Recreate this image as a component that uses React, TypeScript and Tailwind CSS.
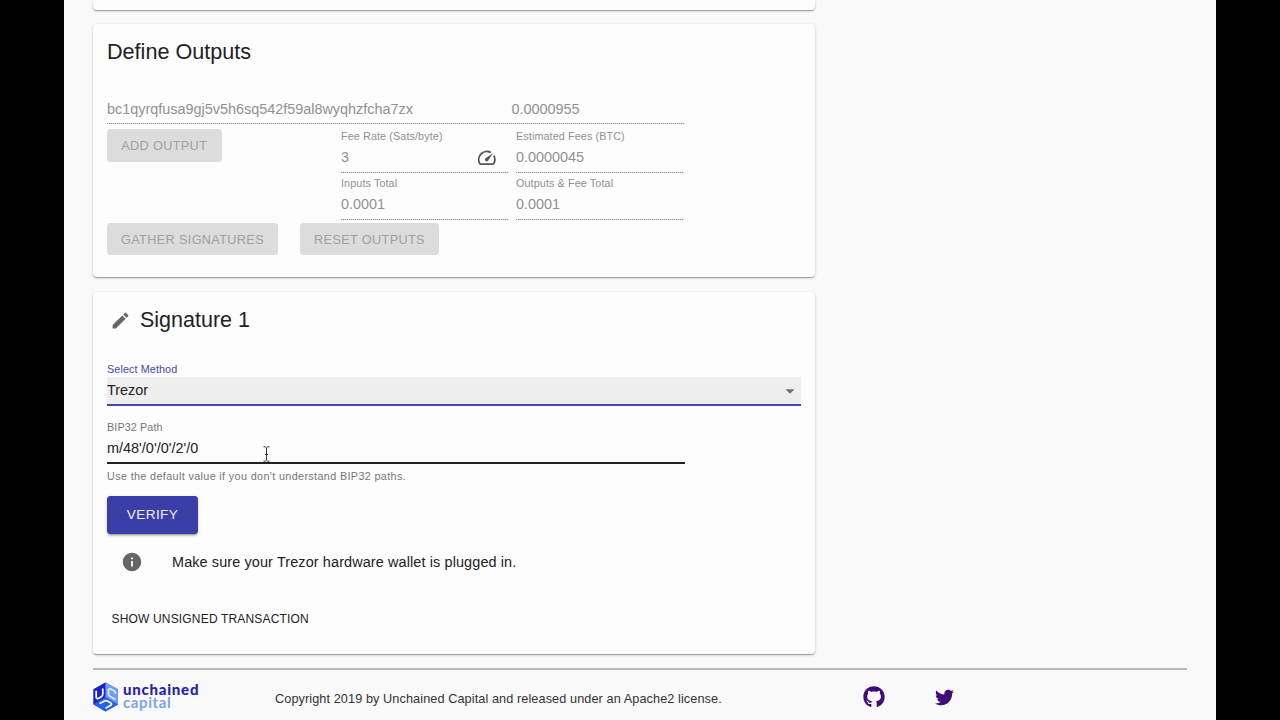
import type { ReactNode } from "react";
import { MdArrowDropDown, MdEdit, MdInfo, MdSpeed } from "react-icons/md";
import { FaGithub, FaTwitter } from "react-icons/fa";

const cardShadow =
  "shadow-[0px_1px_3px_0px_rgba(0,0,0,0.2),0px_1px_1px_0px_rgba(0,0,0,0.14),0px_2px_1px_-1px_rgba(0,0,0,0.15)]";

function DisabledButton({ children, className }: { children: ReactNode; className: string }) {
  return (
    <button
      className={`flex items-center justify-center rounded-[3.5px] bg-[#dcdcdc] text-[12.65px] tracking-[0.38px] whitespace-nowrap text-[#a0a0a0] ${className}`}
    >
      {children}
    </button>
  );
}

function DottedLine() {
  return (
    <div className="h-px w-full bg-[repeating-linear-gradient(90deg,#8c8c8c_0_1px,#dadada_1px_2px)]" />
  );
}

function ReadOnlyField({ label, value, icon }: { label: string; value: string; icon?: ReactNode }) {
  return (
    <div className="flex h-[47px] w-[168px] flex-col text-[#919191]">
      <div className="h-[15px] text-[10.8px] leading-[15px] tracking-[0.1px]">{label}</div>
      <div className="flex h-[28px] items-center justify-between text-[14.4px]">
        <span>{value}</span>
        {icon}
      </div>
      <DottedLine />
    </div>
  );
}

function BrandMark() {
  return (
    <svg width="26" height="30" viewBox="0 0 26 30" className="shrink-0">
      <path d="M12.5 0.5 25 7.2V22.6L12.5 29.5 0.5 22.6V7.2Z" fill="#2b5fe0" />
      <path d="M12.5 0.5V15L0.5 22.4V7.2Z" fill="#1d22c4" />
      <path d="M12.5 0.5 25 7.2V22.4L12.5 15Z" fill="#6c9bf0" />
      <path d="M12.5 15 25 22.4 12.5 29.5 0.5 22.4Z" fill="#2463e8" />
      <path d="M3.2 8.8V15.2Q3.4 17.4 5.4 16.4L8.6 14.5Q9.8 13.6 9.8 12V6.4" fill="none" stroke="#fff" strokeWidth="1.7" />
      <path d="M22.4 12V10.6Q22.2 9.4 21 8.7L17.6 6.9Q15.6 6.4 15.5 8.2V12.2Q15.6 13.6 16.8 14.3L22.6 17.6" fill="none" stroke="#dbe8ff" strokeWidth="1.7" />
      <path d="M6.6 21.6 11.6 18.9Q13 18.2 14.6 19.1L17.8 20.9Q19.4 22.1 17.8 23.2L12.6 26.2" fill="none" stroke="#fff" strokeWidth="1.7" />
    </svg>
  );
}

function TextCursor() {
  return (
    <svg width="7" height="16" viewBox="0 0 7 16" className="absolute top-[27px] left-[156px]">
      <path
        d="M0.5 0.8H2.4L3.5 1.8 4.6 0.8H6.5M0.5 15.2H2.4L3.5 14.2 4.6 15.2H6.5M3.5 1.8V14.2M2 8.5H5"
        fill="none"
        stroke="#333"
        strokeWidth="1"
      />
    </svg>
  );
}

function OutputsCard() {
  return (
    <section className={`h-[253px] w-[722.4px] rounded-[4px] bg-[#fdfdfd] px-[14px] pt-[14px] ${cardShadow}`}>
      <h2 className="text-[21.6px] leading-7 text-[#222]">Define Outputs</h2>
      <div className="mt-[28px] w-[578px]">
        <div className="flex h-[29px] items-center pt-[2px] text-[14.42px] text-[#919191]">
          <span className="w-[404.5px]">bc1qyrqfusa9gj5v5h6sq542f59al8wyqhzfcha7zx</span>
          <span>0.0000955</span>
        </div>
        <DottedLine />
        <div className="flex pt-[5px]">
          <DisabledButton className="h-[33px] w-[114.5px] pt-px">ADD OUTPUT</DisabledButton>
          <div className="ml-[119.5px] grid grid-cols-2 gap-x-[7px]">
            <ReadOnlyField
              label="Fee Rate (Sats/byte)"
              value="3"
              icon={<MdSpeed className="mr-[11.5px] size-[21.5px] text-[#555]" />}
            />
            <ReadOnlyField label="Estimated Fees (BTC)" value="0.0000045" />
            <ReadOnlyField label="Inputs Total" value="0.0001" />
            <ReadOnlyField label="Outputs & Fee Total" value="0.0001" />
          </div>
        </div>
        <div className="flex gap-[22px]">
          <DisabledButton className="h-8 w-[171px] pt-[2px]">GATHER SIGNATURES</DisabledButton>
          <DisabledButton className="h-8 w-[139px] pt-[2px]">RESET OUTPUTS</DisabledButton>
        </div>
      </div>
    </section>
  );
}

function SignatureCard() {
  return (
    <section className={`h-[362px] w-[722.4px] rounded-[4px] bg-[#fdfdfd] px-[14px] pt-[14px] text-[#222] ${cardShadow}`}>
      <h2 className="flex items-center text-[21.5px] leading-7">
        <MdEdit className="mr-[9px] ml-[3px] size-[21px] text-[#666]" />
        Signature 1
      </h2>
      <div className="mt-[27px] w-[694px]">
        <div className="h-4 text-[10.8px] leading-[17px] tracking-[0.1px] text-[#3f4aa8]">Select Method</div>
        <div className="flex h-[29px] items-center justify-between border-b-2 border-[#3f4aa8] bg-[#eee] text-[14.45px]">
          <span>Trezor</span>
          <MdArrowDropDown className="size-[22px] text-[#707070]" />
        </div>
      </div>
      <div className="relative mt-[13px] w-[578px]">
        <div className="h-4 text-[10.8px] leading-4 tracking-[0.1px] text-[#757575]">BIP32 Path</div>
        <div className="flex h-[29px] items-center border-b-2 border-[#222] text-[14.45px]">m/48'/0'/0'/2'/0</div>
        <TextCursor />
        <div className="mt-[4px] h-4 text-[10.8px] leading-4 tracking-[0.36px] text-[#757575]">
          Use the default value if you don't understand BIP32 paths.
        </div>
      </div>
      <button className="mt-[12px] flex h-[38px] w-[91px] items-center justify-center rounded-[3.5px] bg-[#3a3fa8] text-[13.6px] tracking-[0.4px] text-[#eeeefa] shadow-[0px_3px_1px_-2px_rgba(0,0,0,0.2),0px_2px_2px_0px_rgba(0,0,0,0.14),0px_1px_4px_0px_rgba(0,0,0,0.12)]">
        VERIFY
      </button>
      <div className="mt-[17px] flex h-[23px] items-center text-[14.45px] tracking-[0.11px]">
        <MdInfo className="mr-[29px] mb-px ml-[14px] size-[22px] text-[#666]" />
        Make sure your Trezor hardware wallet is plugged in.
      </div>
      <button className="mt-[34px] ml-[4.5px] block h-[22px] text-[12px] leading-[22px] tracking-[0.17px]">
        SHOW UNSIGNED TRANSACTION
      </button>
    </section>
  );
}

function Footer() {
  return (
    <footer className="mt-[14px] w-[1094px] border-t-2 border-[#b8b8b8]">
      <div className="flex h-[54px] items-center">
        <div className="flex w-[182px] items-center gap-[4px]">
          <BrandMark />
          <div className="pb-[3px] [font-family:Lato,sans-serif] text-[15px] leading-[13px] font-black">
            <div className="tracking-[0.75px] text-[#2420b8]">unchained</div>
            <div className="font-bold tracking-[0.6px] text-[#7da5ea]">capital</div>
          </div>
        </div>
        <p className="w-[588px] pt-[5px] text-[12.7px] tracking-[0.09px] text-[#333]">
          Copyright 2019 by Unchained Capital and released under an Apache2 license.
        </p>
        <FaGithub className="size-[22px] text-[#420c78]" />
        <FaTwitter className="ml-[50px] size-[19px] text-[#420c78]" />
      </div>
    </footer>
  );
}

export default function App() {
  return (
    <div className="h-[720px] w-[1280px] overflow-hidden bg-black px-16 [font-family:'Liberation_Sans',Arial,sans-serif]">
      <main className="flex h-full flex-col bg-[#f9f9f9] pl-[29px]">
        <div className={`h-[10px] w-[722.4px] shrink-0 rounded-b-[4px] bg-[#fdfdfd] ${cardShadow}`} />
        <div className="flex flex-col gap-[15px] pt-[14px]">
          <OutputsCard />
          <SignatureCard />
        </div>
        <Footer />
      </main>
    </div>
  );
}
